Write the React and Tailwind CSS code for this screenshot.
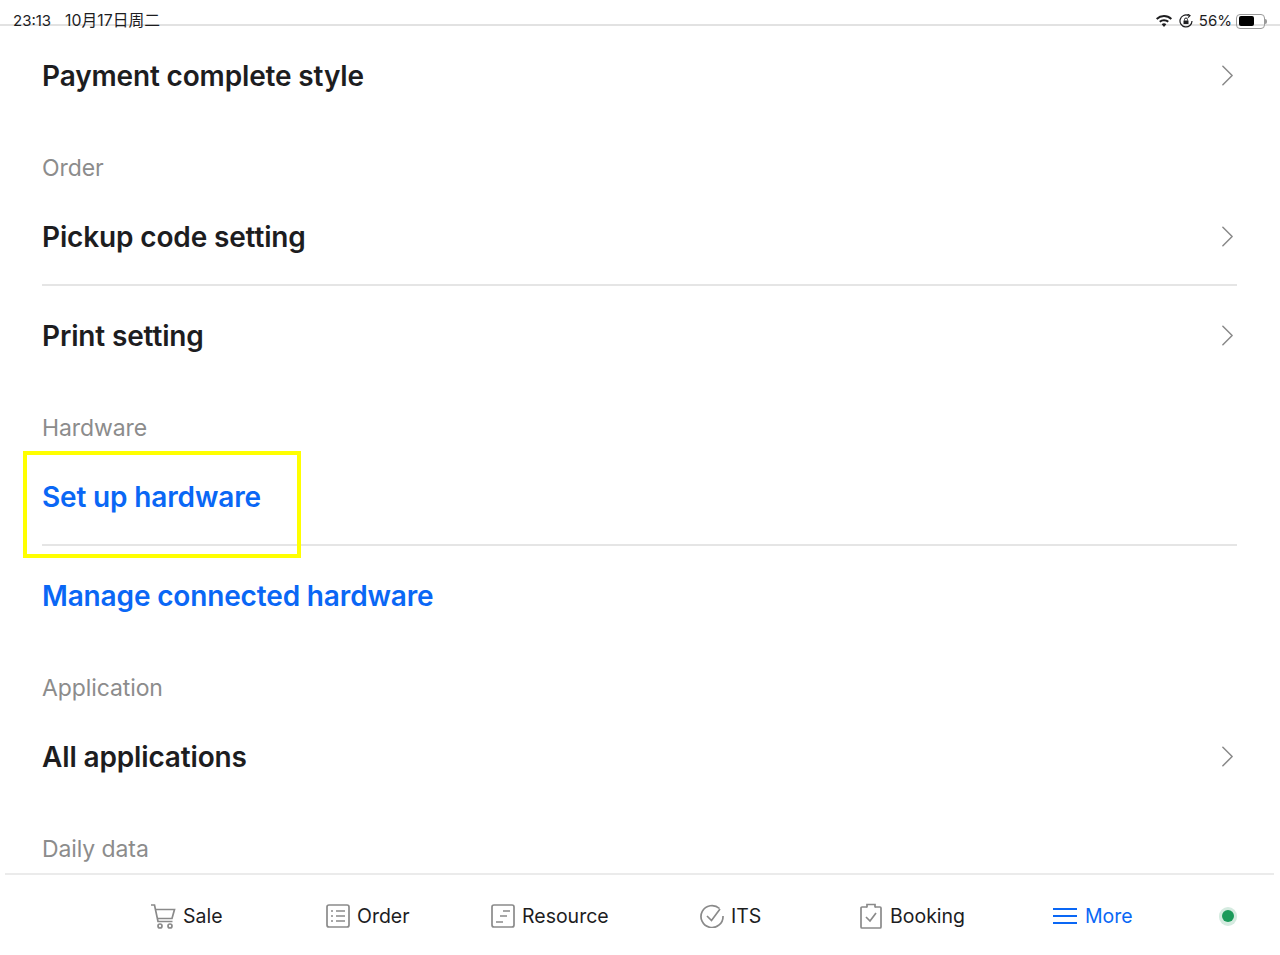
import { ChevronRight } from "lucide-react";

const font = { fontFamily: "Inter, 'Noto Sans CJK SC', sans-serif" };

function Row({ label, blue, arrow, divider, children }) {
  return (
    <div className="relative h-[99px] shrink-0 mx-[42px]">
      <div className="flex items-center justify-between h-full">
        <span
          className={`text-[28px] leading-none font-semibold tracking-[-0.15px] ${
            blue ? "text-[#0a67f5]" : "text-[#1d1d1f]"
          }`}
        >
          {label}
        </span>
        {arrow && (
          <ChevronRight
            size={37}
            strokeWidth={1}
            className="text-[#8a8a8a] -mr-[8px]"
          />
        )}
      </div>
      {children}
      {divider && <div className="h-[2px] -mt-[2px] mr-px bg-[#e5e5e5]" />}
    </div>
  );
}

function SectionLabel({ children }) {
  return (
    <div className="h-[62px] shrink-0 mx-[42px] pt-[29px] text-[23px] tracking-[-0.1px] leading-[28px] text-[#8c8c8c]">
      {children}
    </div>
  );
}

function Tab({ icon, label, active, className }) {
  return (
    <div className={`flex items-center gap-[7px] ${className}`}>
      {icon}
      <span
        className={`mt-[2px] text-[19.5px] font-normal ${
          active ? "text-[#0a67f5]" : "text-[#1d1d1f]"
        }`}
      >
        {label}
      </span>
    </div>
  );
}

function CartIcon() {
  return (
    <svg width="26" height="26" viewBox="0 0 26 26" fill="none" stroke="#8a8a8a" strokeWidth="1.7">
      <path d="M1 2h3.500l3.500 16.500h14.500" />
      <path d="M5.500 6.500h19l-2.500 9H7.500" />
      <circle cx="10" cy="23" r="2" />
      <circle cx="20" cy="23" r="2" />
    </svg>
  );
}

function OrderIcon() {
  return (
    <svg width="24" height="24" viewBox="0 0 24 24" fill="none" stroke="#8a8a8a" strokeWidth="1.7">
      <rect x="1" y="1" width="22" height="22" rx="2" />
      <path d="M5 7h2M10 7h9M5 12h2M10 12h9M5 17h2M10 17h9" />
    </svg>
  );
}

function ResourceIcon() {
  return (
    <svg width="24" height="24" viewBox="0 0 24 24" fill="none" stroke="#8a8a8a" strokeWidth="1.7">
      <rect x="1" y="1" width="22" height="22" rx="2" />
      <path d="M12 7h7M9 12h7M5 18h7" />
    </svg>
  );
}

function CheckIcon() {
  return (
    <svg width="24" height="24" viewBox="0 0 24 24" fill="none" stroke="#8a8a8a" strokeWidth="1.7">
      <path d="M19.500 4.500A11 11 0 1 0 23 12" />
      <path d="M7 12l4.500 4.500L20 5" />
    </svg>
  );
}

function BookingIcon() {
  return (
    <svg width="24" height="26" viewBox="0 0 24 26" fill="none" stroke="#8a8a8a" strokeWidth="1.7">
      <path d="M8 4H3a1 1 0 0 0-1 1v19a1 1 0 0 0 1 1h18a1 1 0 0 0 1-1V5a1 1 0 0 0-1-1h-5" />
      <path d="M8 4.500V1.500h8v3" />
      <path d="M7 14l4 4 6-8" />
    </svg>
  );
}

function MenuIcon() {
  return (
    <svg width="26" height="18" viewBox="0 0 26 18" fill="none" stroke="#0a67f5" strokeWidth="2">
      <path d="M1 2h24M1 9h24M1 16h24" />
    </svg>
  );
}

function WifiIcon() {
  return (
    <svg width="16" height="12" viewBox="0 0 16 12" fill="#1d1d1f">
      <path d="M8 0c3 0 5.800 1.200 8 3.200l-1.300 1.500A10 10 0 0 0 8 2 10 10 0 0 0 1.300 4.700L0 3.200A12 12 0 0 1 8 0z" />
      <path d="M8 4.200c1.900 0 3.600.7 4.900 1.900l-1.300 1.500A5.400 5.400 0 0 0 8 6.200c-1.400 0-2.600.5-3.600 1.400L3.100 6.100A7.300 7.300 0 0 1 8 4.200z" />
      <path d="M8 8.300c.9 0 1.700.3 2.300.9L8 12 5.700 9.200c.6-.6 1.400-.9 2.300-.9z" />
    </svg>
  );
}

function RotationLockIcon() {
  return (
    <svg width="14" height="14" viewBox="0 0 14 14" fill="none" stroke="#1d1d1f" strokeWidth="1.200">
      <path d="M13 7A6 6 0 1 1 9.500 1.500" />
      <path d="M8.500 0l2.500 1.700-2 2" />
      <rect x="4.500" y="6.500" width="5" height="3.500" fill="#1d1d1f" stroke="none" />
      <path d="M5.500 6.500V5.500a1.500 1.500 0 0 1 3 0v1" strokeWidth="1" />
    </svg>
  );
}

export default function App() {
  return (
    <div style={font} className="h-[955px] bg-white flex flex-col overflow-hidden">
      {/* Status bar */}
      <div className="h-[26px] shrink-0 border-b-2 border-[#e2e2e2] flex items-end justify-between pl-[13px] pr-[13px] text-[15px] leading-[20px] text-[#1d1d1f]">
        <div className="flex gap-[14px] items-center -mb-[7px]">
          <span>23:13</span>
          <span className="text-[15.8px]">10月17日周二</span>
        </div>
        <div className="flex items-center -mb-[7px]">
          <WifiIcon />
          <span className="ml-[7px]">
            <RotationLockIcon />
          </span>
          <span className="ml-[6px]">56%</span>
          <div className="ml-[4px] w-[29px] h-[15px] border border-[#9a9a9a] rounded-[4px] p-[1.500px]">
            <div className="w-[15px] h-full bg-black rounded-[2px]" />
          </div>
          <div className="w-[2px] h-[5px] bg-[#9a9a9a] rounded-r-sm" />
        </div>
      </div>

      {/* Settings list */}
      <div className="flex-1 overflow-hidden flex flex-col">
        <Row label="Payment complete style" arrow />
        <SectionLabel>Order</SectionLabel>
        <Row label="Pickup code setting" arrow divider />
        <Row label="Print setting" arrow />
        <SectionLabel>Hardware</SectionLabel>
        <Row label="Set up hardware" blue divider>
          {/* Highlight box */}
          <div className="absolute left-[-19px] top-[4px] w-[278px] h-[107px] border-[4px] border-[#ffff00] z-10" />
        </Row>
        <Row label="Manage connected hardware" blue />
        <SectionLabel>Application</SectionLabel>
        <Row label="All applications" arrow />
        <SectionLabel>Daily data</SectionLabel>
      </div>

      {/* Bottom tabs */}
      <div className="h-[82px] shrink-0 ml-[5px] mr-[6px] pt-[2px] border-t-2 border-[#ebebeb] flex items-center">
        <Tab className="ml-[145px] w-[176px]" icon={<CartIcon />} label="Sale" />
        <Tab className="w-[165px]" icon={<OrderIcon />} label="Order" />
        <Tab className="w-[209px]" icon={<ResourceIcon />} label="Resource" />
        <Tab className="w-[159px]" icon={<CheckIcon />} label="ITS" />
        <Tab className="w-[193px]" icon={<BookingIcon />} label="Booking" />
        <Tab className="w-[167px]" icon={<MenuIcon />} label="More" active />
        <div className="w-[18px] h-[19px] rounded-full bg-[#d5ebe0] flex items-center justify-center">
          <div className="w-[12px] h-[12px] rounded-full bg-[#1b9a5a]" />
        </div>
      </div>
    </div>
  );
}
